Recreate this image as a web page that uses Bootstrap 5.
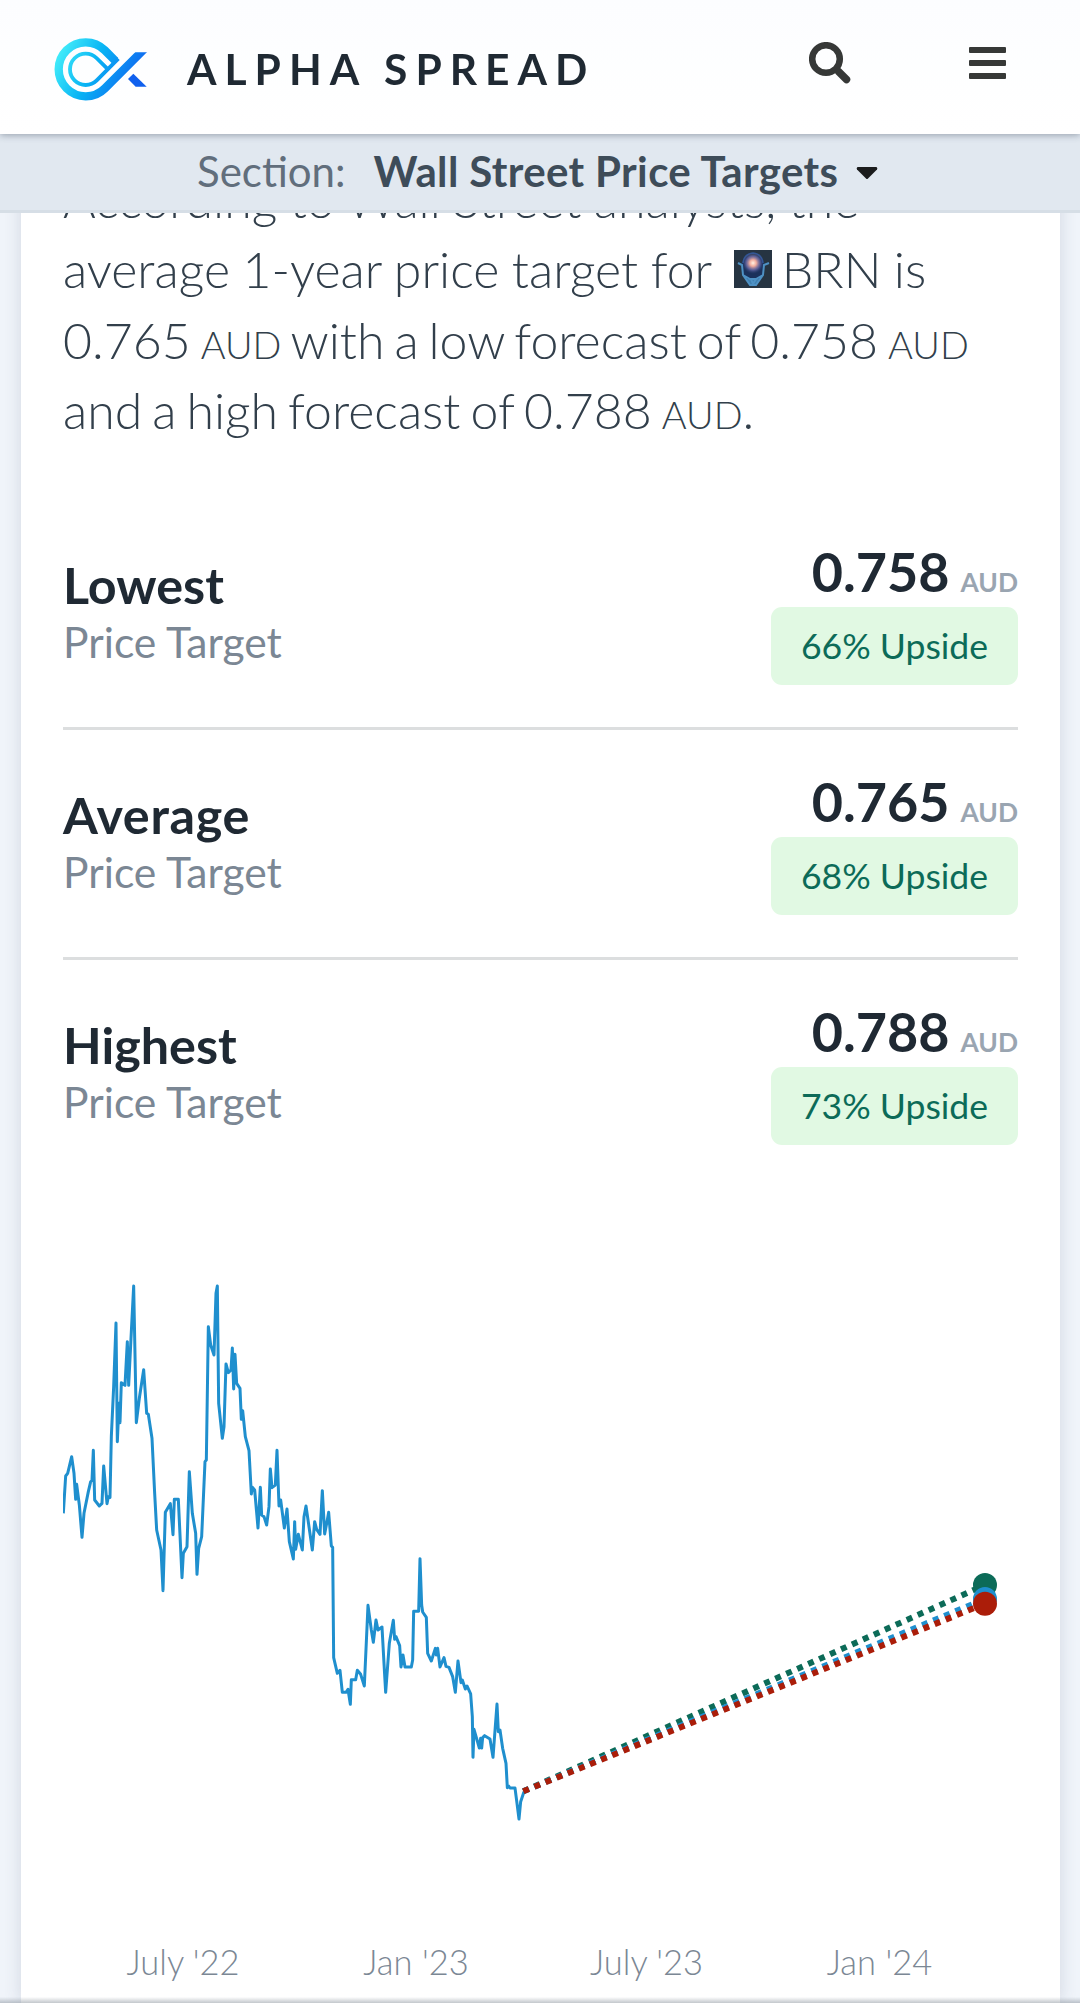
<!DOCTYPE html>
<html lang="en">
<head>
<meta charset="utf-8">
<meta name="viewport" content="width=device-width, initial-scale=1">
<title>Alpha Spread - Wall Street Price Targets</title>
<link rel="stylesheet" href="https://cdn.jsdelivr.net/npm/bootstrap@5.3.0/dist/css/bootstrap.min.css">
<style>
  html, body { height: 2003px; overflow: hidden; }
  body { background: #f0f4fa; font-family: Lato, sans-serif; color: #1f2933; }
  .topbar { height: 134px; background: linear-gradient(#fcfdff, #fff); box-shadow: 0 1px 7px rgba(40,55,75,.42); padding: 0 74px 0 45px; z-index: 2; }
  .brand-name { font-size: 42.5px; font-weight: 700; letter-spacing: 8px; line-height: 1.2; margin: 2px 0 0 32px; white-space: nowrap; }
  .top-icons { gap: 118px; margin-top: -8px; }
  .sectionbar { height: 79px; background: #e1e8f0; border-bottom: 3px solid #d6dee6; font-size: 42px; line-height: 74px; padding: 0 0 2px 197px; white-space: nowrap; z-index: 1; }
  .section-label { color: #616e7c; }
  .section-name { color: #3e4c59; font-weight: 700; margin-left: 28px; letter-spacing: .36px; }
  .caret { margin: 5px 0 0 18px; }
  .panel { margin: 0 20px 0 21px; padding: 164px 42px 0; height: 2003px; background: #fff; box-shadow: 0 0 16px rgba(50,70,95,.16); }
  .intro { font-size: 50px; line-height: 70.4px; font-weight: 300; color: #323f4b; white-space: nowrap; word-spacing: -1.1px; }
  .intro .figures { word-spacing: -3.6px; }
  .intro .cur { font-size: 38px; line-height: 1; }
  .ticker { width: 38px; height: 38px; margin: 0 10px 0 10px; vertical-align: baseline; }
  .targets { padding-top: 54.7px; height: 757.4px; }
  .target { height: 229.7px; padding-top: 41px; border-bottom: 3px solid #dcdedf; }
  .target:last-child { border-bottom-color: transparent; }
  .target-left { padding-top: 14px; }
  .target-name { font-size: 50.3px; font-weight: 700; line-height: 60px; margin-bottom: 2px; }
  .target-name.loose { letter-spacing: .65px; }
  .target-sub { font-size: 42.6px; line-height: 50px; color: #7b8794; }
  .price { font-size: 53.9px; font-weight: 700; line-height: 60px; margin-bottom: -5px; }
  .price small { font-size: 26.4px; color: #9aa5b1; margin-left: 11px; }
  .upside { width: 247px; height: 78px; line-height: 78px; border-radius: 11px; background: #e1f9e3; color: #0c6b58; font-size: 35.6px; }
  .chart text { font-size: 34.5px; font-weight: 300; fill: #7b8794; }
  .bottom-shade { height: 6px; background: linear-gradient(rgba(120,130,140,0), rgba(120,130,140,.45)); }
</style>
<script src="https://cdn.jsdelivr.net/npm/bootstrap@5.3.0/dist/js/bootstrap.bundle.min.js"></script>
</head>
<body>
<header class="fixed-top">
  <nav class="topbar d-flex align-items-center justify-content-between position-relative">
    <a class="d-flex align-items-center text-reset text-decoration-none" href="#">
      <svg width="110" height="80" viewBox="0 -3 330 240" class="mt-1" aria-hidden="true">
        <defs>
          <linearGradient id="lg" gradientUnits="userSpaceOnUse" x1="40" y1="50" x2="280" y2="170">
            <stop offset="0" stop-color="#46f0fa"/><stop offset=".45" stop-color="#08b4f4"/><stop offset="1" stop-color="#1060f0"/>
          </linearGradient>
          <clipPath id="lc"><path d="M0 0H226V67H330V240H0Z"/></clipPath>
        </defs>
        <g clip-path="url(#lc)" fill="none" stroke="url(#lg)">
          <path stroke-width="25" d="M305 50L179.3 175.3A81 81 0 1 1 179.3 60.7L211 92.5"/>
          <path stroke-width="11.500" d="M220 86L155.200 151.200A47 47 0 1 1 155.200 84.800L189 118"/>
        </g>
        <path fill="#1060ee" d="M249 147L265 131L305 170H272Z"/>
      </svg>
      <span class="brand-name">ALPHA SPREAD</span>
    </a>
    <div class="top-icons d-flex align-items-center">
      <svg width="42" height="42" viewBox="0 0 42 42" fill="none" stroke="#363837" aria-label="Search">
        <circle cx="17" cy="17" r="13.800" stroke-width="6.500"/>
        <path d="M29.500 29.500L37.500 37.500" stroke-width="7.500" stroke-linecap="round"/>
      </svg>
      <svg width="37" height="33" viewBox="0 0 37 33" fill="#363837" aria-label="Menu">
        <rect y="0" width="37" height="6" rx="1"/><rect y="13" width="37" height="6" rx="1"/><rect y="26" width="37" height="6" rx="1"/>
      </svg>
    </div>
  </nav>
  <div class="sectionbar d-flex align-items-center position-relative">
    <span class="section-label">Section:</span>
    <span class="section-name">Wall Street Price Targets</span>
    <svg class="caret" width="22" height="13" viewBox="0 0 22 13" aria-hidden="true"><path fill="#1b1c1d" d="M1.500 0H20.500Q22 1 21 2.500L12 11.500Q11 12.500 10 11.500L1 2.500Q0 1 1.500 0Z"/></svg>
  </div>
</header>

<main class="panel">
  <p class="intro mb-0">According to Wall Street analysts, the<br>average 1-year price target for
    <svg class="ticker" viewBox="0 0 38 38" aria-hidden="true">
      <defs><radialGradient id="glow"><stop offset="0" stop-color="#fff3e4"/><stop offset=".3" stop-color="#f2ad9d"/><stop offset=".65" stop-color="#706fae" stop-opacity=".7"/><stop offset="1" stop-color="#273c70" stop-opacity="0"/></radialGradient></defs>
      <rect width="38" height="38" fill="#263442"/>
      <path d="M8 17C5 2 33 2 30 17L28 27L22 36H16L10 27Z" fill="#1b315b"/>
      <path d="M11 28L16 29H22L27 28L22 35H16Z" fill="#3f7fb0"/>
      <path d="M4 13L8 15L9 25L16 29L22 29L29 25L30 15L35 13M9 25L16 35H22L29 25M17 29L19 34L22 29" stroke="#4e91c4" stroke-width="2" fill="none"/>
      <path d="M9 13Q10 4 19 3Q28 4 29 13" stroke="#31599a" stroke-width="1.500" fill="none"/>
      <circle cx="19" cy="13" r="11" fill="url(#glow)"/>
    </svg>BRN is<br><span class="figures">0.765 <span class="cur">AUD</span> with a low forecast of 0.758 <span class="cur">AUD</span><br>and a high forecast of 0.788 <span class="cur">AUD</span>.</span></p>

  <section class="targets">
    <div class="target d-flex justify-content-between">
      <div class="target-left"><div class="target-name">Lowest</div><div class="target-sub">Price Target</div></div>
      <div class="text-end"><div class="price">0.758<small>AUD</small></div><div class="upside text-center ms-auto">66% Upside</div></div>
    </div>
    <div class="target d-flex justify-content-between">
      <div class="target-left"><div class="target-name loose">Average</div><div class="target-sub">Price Target</div></div>
      <div class="text-end"><div class="price">0.765<small>AUD</small></div><div class="upside text-center ms-auto">68% Upside</div></div>
    </div>
    <div class="target d-flex justify-content-between">
      <div class="target-left"><div class="target-name">Highest</div><div class="target-sub">Price Target</div></div>
      <div class="text-end"><div class="price">0.788<small>AUD</small></div><div class="upside text-center ms-auto">73% Upside</div></div>
    </div>
  </section>

  <svg class="chart d-block" width="955" height="800" viewBox="63 1203 955 800" role="img" aria-label="Price history and forecast">
    <g transform="translate(40 1260) scale(.33333)" fill="none" stroke-width="9">
      <polyline stroke="#1f8fce" stroke-linejoin="round" points="70,760 77,648 83,640 95,590 102,640 107,718 110,673 118,735 126,832 132,760 145,695 152,665 156,662 160,571 164,720 178,738 186,730 191,618 201,731 205,710 210,712 214,530 221,380 228,189 232,545 237,430 240,488 244,368 255,376 262,245 266,376 273,235 281,78 289,488 298,415 311,329 320,460 325,463 336,535 344,700 350,810 363,870 369,992 376,757 391,731 399,824 403,718 415,718 426,953 430,880 441,860 448,635 457,760 467,820 471,943 476,865 485,830 495,605 499,600 505,200 512,255 522,285 528,100 532,78 536,430 547,535 552,500 558,312 565,338 573,330 577,264 581,387 585,283 590,370
      600,385 604,478 608,452 616,530 627,572 634,702 637,682 644,690 654,804 661,682 665,765 672,770 680,795 687,740 691,627 696,683 706,675 711,571 717,738 722,720 733,804 741,747 748,845 760,897 764,785 767,868 775,823 787,870 792,770 798,738 807,800 817,870 824,785 830,808 840,823 847,692 854,822 861,785 866,757 874,858 878,862
      881,1193 892,1240 900,1231 907,1297 918,1297 924,1288 931,1333 934,1259 947,1259 952,1231 962,1243 973,1278 984,1036 994,1110 1000,1147 1008,1080 1014,1110 1026,1101 1032,1210 1037,1297 1048,1150 1060,1081 1064,1138 1068,1130 1079,1157 1083,1221 1089,1185 1095,1221 1114,1221 1118,1200 1121,1054 1136,1054 1140,896 1145,1035 1148,1056 1159,1072 1163,1180 1174,1203 1186,1165 1189,1185 1193,1165 1200,1221 1212,1193 1218,1219 1227,1222 1238,1250 1246,1297 1254,1203 1263,1268 1267,1260 1276,1287 1281,1278 1292,1302 1297,1370 1299,1492 1302,1408 1318,1464 1322,1435 1325,1464 1328,1433 1334,1427 1350,1437 1359,1492 1371,1332 1375,1415 1380,1410 1388,1465 1398,1510 1402,1583 1406,1578 1410,1584 1425,1584 1431,1630 1437,1677 1442,1625 1452,1595"/>
      <g stroke-width="18" stroke-dasharray="18 18">
        <path stroke="#0c6b58" d="M1450 1594L2835 975"/>
        <path stroke="#1f8fce" d="M1450 1594L2835 1017"/>
        <path stroke="#ab1d09" d="M1450 1594L2835 1031"/>
      </g>
      <g stroke="none">
        <circle cx="2835" cy="975" r="36" fill="#0c6b58"/>
        <circle cx="2835" cy="1017" r="36" fill="#1f8fce"/>
        <circle cx="2835" cy="1031" r="36" fill="#ab1d09"/>
      </g>
    </g>
    <g text-anchor="middle">
      <text x="183" y="1975">July '22</text><text x="416" y="1975">Jan '23</text><text x="646.5" y="1975">July '23</text><text x="879.5" y="1975">Jan '24</text>
    </g>
  </svg>
</main>
<div class="bottom-shade fixed-bottom"></div>
</body>
</html>
